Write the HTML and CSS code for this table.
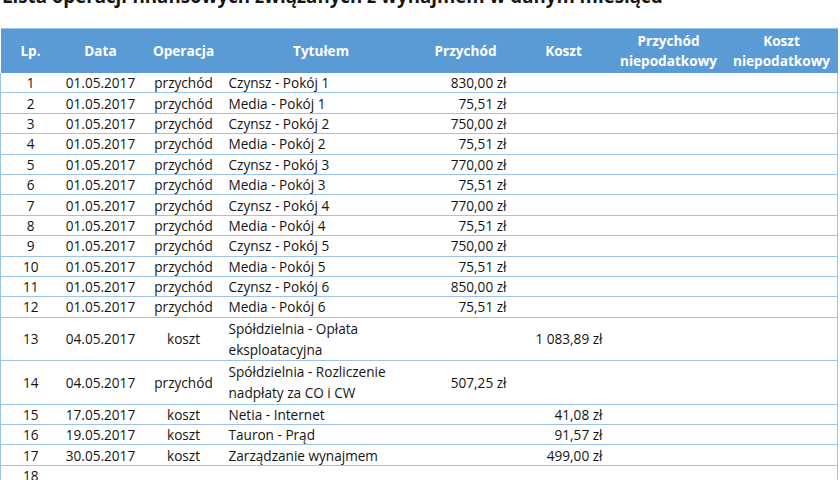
FILE: index.html
```html
<!DOCTYPE html>
<html lang="pl">
<head>
<meta charset="utf-8">
<title>Lista operacji</title>
<link rel="stylesheet" href="styles.css">
</head>
<body>
<h1 class="title">Lista operacji finansowych związanych z wynajmem w danym miesiącu</h1>
<table class="ops">
  <colgroup>
    <col class="c-lp"><col class="c-date"><col class="c-op"><col class="c-title">
    <col class="c-inc"><col class="c-cost"><col class="c-inc2"><col class="c-cost2">
  </colgroup>
  <thead>
    <tr>
      <th>Lp.</th><th>Data</th><th>Operacja</th><th>Tytułem</th>
      <th>Przychód</th><th>Koszt</th><th>Przychód<br>niepodatkowy</th><th>Koszt<br>niepodatkowy</th>
    </tr>
  </thead>
  <tbody>
    <tr><td class="ctr">1</td><td class="ctr">01.05.2017</td><td class="ctr">przychód</td><td class="txt">Czynsz - Pokój 1</td><td class="num">830,00 zł</td><td class="num"></td><td></td><td></td></tr>
    <tr><td class="ctr">2</td><td class="ctr">01.05.2017</td><td class="ctr">przychód</td><td class="txt">Media - Pokój 1</td><td class="num">75,51 zł</td><td class="num"></td><td></td><td></td></tr>
    <tr><td class="ctr">3</td><td class="ctr">01.05.2017</td><td class="ctr">przychód</td><td class="txt">Czynsz - Pokój 2</td><td class="num">750,00 zł</td><td class="num"></td><td></td><td></td></tr>
    <tr><td class="ctr">4</td><td class="ctr">01.05.2017</td><td class="ctr">przychód</td><td class="txt">Media - Pokój 2</td><td class="num">75,51 zł</td><td class="num"></td><td></td><td></td></tr>
    <tr><td class="ctr">5</td><td class="ctr">01.05.2017</td><td class="ctr">przychód</td><td class="txt">Czynsz - Pokój 3</td><td class="num">770,00 zł</td><td class="num"></td><td></td><td></td></tr>
    <tr><td class="ctr">6</td><td class="ctr">01.05.2017</td><td class="ctr">przychód</td><td class="txt">Media - Pokój 3</td><td class="num">75,51 zł</td><td class="num"></td><td></td><td></td></tr>
    <tr><td class="ctr">7</td><td class="ctr">01.05.2017</td><td class="ctr">przychód</td><td class="txt">Czynsz - Pokój 4</td><td class="num">770,00 zł</td><td class="num"></td><td></td><td></td></tr>
    <tr><td class="ctr">8</td><td class="ctr">01.05.2017</td><td class="ctr">przychód</td><td class="txt">Media - Pokój 4</td><td class="num">75,51 zł</td><td class="num"></td><td></td><td></td></tr>
    <tr><td class="ctr">9</td><td class="ctr">01.05.2017</td><td class="ctr">przychód</td><td class="txt">Czynsz - Pokój 5</td><td class="num">750,00 zł</td><td class="num"></td><td></td><td></td></tr>
    <tr><td class="ctr">10</td><td class="ctr">01.05.2017</td><td class="ctr">przychód</td><td class="txt">Media - Pokój 5</td><td class="num">75,51 zł</td><td class="num"></td><td></td><td></td></tr>
    <tr><td class="ctr">11</td><td class="ctr">01.05.2017</td><td class="ctr">przychód</td><td class="txt">Czynsz - Pokój 6</td><td class="num">850,00 zł</td><td class="num"></td><td></td><td></td></tr>
    <tr><td class="ctr">12</td><td class="ctr">01.05.2017</td><td class="ctr">przychód</td><td class="txt">Media - Pokój 6</td><td class="num">75,51 zł</td><td class="num"></td><td></td><td></td></tr>
    <tr class="tall t13"><td class="ctr">13</td><td class="ctr">04.05.2017</td><td class="ctr">koszt</td><td class="txt">Spółdzielnia - Opłata<br>eksploatacyjna</td><td class="num"></td><td class="num">1 083,89 zł</td><td></td><td></td></tr>
    <tr class="tall t14"><td class="ctr">14</td><td class="ctr">04.05.2017</td><td class="ctr">przychód</td><td class="txt">Spółdzielnia - Rozliczenie<br>nadpłaty za CO i CW</td><td class="num">507,25 zł</td><td class="num"></td><td></td><td></td></tr>
    <tr><td class="ctr">15</td><td class="ctr">17.05.2017</td><td class="ctr">koszt</td><td class="txt">Netia - Internet</td><td class="num"></td><td class="num">41,08 zł</td><td></td><td></td></tr>
    <tr><td class="ctr">16</td><td class="ctr">19.05.2017</td><td class="ctr">koszt</td><td class="txt">Tauron - Prąd</td><td class="num"></td><td class="num">91,57 zł</td><td></td><td></td></tr>
    <tr><td class="ctr">17</td><td class="ctr">30.05.2017</td><td class="ctr">koszt</td><td class="txt">Zarządzanie wynajmem</td><td class="num"></td><td class="num">499,00 zł</td><td></td><td></td></tr>
    <tr><td class="ctr">18</td><td class="ctr"></td><td class="ctr"></td><td class="txt"></td><td class="num"></td><td class="num"></td><td></td><td></td></tr>
  </tbody>
</table>
</body>
</html>
```
FILE: styles.css
```css
html, body {
  margin: 0;
  padding: 0;
  background: #ffffff;
}
body {
  font-family: "Open Sans", "Lato", sans-serif;
  color: #141414;
  overflow: hidden;
}
.title {
  font-size: 18.7px;
  font-weight: 700;
  line-height: 19px;
  height: 19px;
  margin: -14px 0 23px 2px;
  white-space: nowrap;
  color: #161616;
}
.ops {
  border-collapse: collapse;
  table-layout: fixed;
  width: 837px;
  font-size: 13.6px;
}
.c-lp { width: 60px; }
.c-date { width: 80px; }
.c-op { width: 86px; }
.c-title { width: 189px; }
.c-inc { width: 100px; }
.c-cost { width: 96px; }
.c-inc2 { width: 114px; }
.c-cost2 { width: 112px; }

.ops thead th {
  background: #5b9bd5;
  color: #ffffff;
  font-weight: 700;
  height: 44px;
  padding: 0;
  line-height: 20px;
  text-align: center;
  vertical-align: middle;
  border-top: 1px solid #9dc3e6;
}
.ops tbody td {
  height: 19.4px;
  padding: 0;
  line-height: 19px;
  border-bottom: 1px solid #9dc3e6;
  white-space: nowrap;
  vertical-align: middle;
}
.ops tbody td:first-child { border-left: 1px solid #9dc3e6; }
.ops tbody td:last-child { border-right: 1px solid #9dc3e6; }
.ops tbody tr.t13 td { height: 42px; }
.ops tbody tr.t14 td { height: 43px; }
.ops tbody tr.tall td { line-height: 21px; }
.ctr { text-align: center; }
.txt { text-align: left; padding-left: 2px !important; }
.num { text-align: right; padding-right: 9px !important; }
```
